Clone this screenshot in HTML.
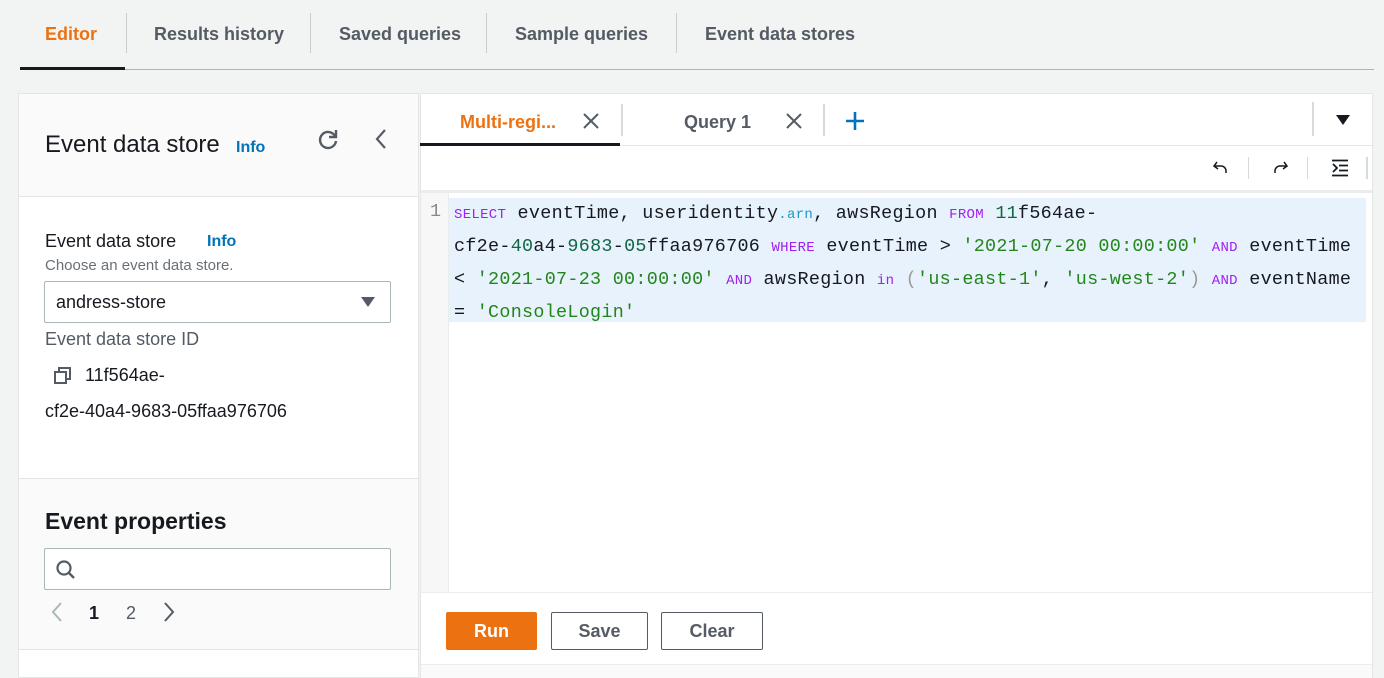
<!DOCTYPE html>
<html><head><meta charset="utf-8"><style>
*{box-sizing:border-box;margin:0;padding:0}
body{width:1384px;height:678px;background:#f2f3f3;font-family:"Liberation Sans",sans-serif;position:relative;overflow:hidden;color:#16191f}
.a{position:absolute}
.tab{position:absolute;top:24px;font-size:18px;font-weight:bold;color:#545b64}
.sep{position:absolute;top:13px;width:1px;height:40px;background:#c8cdcd}
.mono{font-family:"Liberation Mono",monospace;font-size:18.4px;}
.kw{color:#a020f0;font-size:14px}
.s{color:#22861a}
.n{color:#116644}
.btn{position:absolute;top:612px;height:38px;border:1px solid #545b64;border-radius:2px;background:#fff;font-weight:bold;font-size:18px;color:#545b64;text-align:center;line-height:36px}
</style></head><body>
<div class="tab" style="left:45px;color:#ec7211">Editor</div>
<div class="sep" style="left:126px"></div>
<div class="tab" style="left:154px">Results history</div>
<div class="sep" style="left:310px"></div>
<div class="tab" style="left:339px">Saved queries</div>
<div class="sep" style="left:486px"></div>
<div class="tab" style="left:515px">Sample queries</div>
<div class="sep" style="left:676px"></div>
<div class="tab" style="left:705px">Event data stores</div>
<div class="a" style="left:20px;top:69px;width:1354px;height:1px;background:#aab7b8"></div>
<div class="a" style="left:20px;top:67px;width:105px;height:3px;background:#16191f"></div>

<!-- left panel -->
<div class="a" style="left:18px;top:93px;width:401px;height:585px;background:#fff;border:1px solid #e4e6e6"></div>
<div class="a" style="left:19px;top:94px;width:399px;height:103px;background:#fafafa;border-bottom:1px solid #e4e6e6"></div>
<div class="a" style="left:45px;top:131px;font-size:24px">Event data store</div>
<div class="a" style="left:236px;top:139px;font-size:16px;font-weight:bold;color:#0073bb">Info</div>
<svg class="a" style="left:316px;top:127px" width="24" height="24" viewBox="0 0 24 24"><path d="M19 9A8 8 0 1 0 20 14" fill="none" stroke="#545b64" stroke-width="2.4"/><path d="M20 3v7h-7" fill="none" stroke="#545b64" stroke-width="2.4"/></svg>
<svg class="a" style="left:372px;top:127px" width="18" height="24" viewBox="0 0 18 24"><path d="M13 3L5 12l8 9" fill="none" stroke="#545b64" stroke-width="2.2"/></svg>
<div class="a" style="left:45px;top:231px;font-size:18px">Event data store</div>
<div class="a" style="left:207px;top:233px;font-size:16px;font-weight:bold;color:#0073bb">Info</div>
<div class="a" style="left:45px;top:257px;font-size:15px;color:#687078">Choose an event data store.</div>
<div class="a" style="left:44px;top:281px;width:347px;height:42px;border:1px solid #aab7b8;border-radius:2px;background:#fff"></div>
<div class="a" style="left:56px;top:292px;font-size:18px">andress-store</div>
<svg class="a" style="left:360px;top:296px" width="16" height="12"><path d="M1 1h14L8 11z" fill="#545b64"/></svg>
<div class="a" style="left:45px;top:329px;font-size:18px;color:#545b64">Event data store ID</div>
<svg class="a" style="left:53px;top:366px" width="20" height="20" viewBox="0 0 20 20"><rect x="2" y="6" width="11" height="11" fill="none" stroke="#545b64" stroke-width="2"/><path d="M6 6V2h11v11h-4" fill="none" stroke="#545b64" stroke-width="2"/></svg>
<div class="a" style="left:85px;top:365px;font-size:18px">11f564ae-</div>
<div class="a" style="left:45px;top:401px;font-size:18px">cf2e-40a4-9683-05ffaa976706</div>
<div class="a" style="left:19px;top:478px;width:399px;height:172px;background:#fafafa;border-top:1px solid #e4e6e6;border-bottom:1px solid #e4e6e6"></div>
<div class="a" style="left:45px;top:508px;font-size:23px;font-weight:bold">Event properties</div>
<div class="a" style="left:44px;top:548px;width:347px;height:42px;border:1px solid #aab7b8;border-radius:2px;background:#fff"></div>
<svg class="a" style="left:55px;top:559px" width="22" height="22"><circle cx="9" cy="9" r="6.5" fill="none" stroke="#545b64" stroke-width="2.2"/><path d="M13.5 13.5L19 19" stroke="#545b64" stroke-width="2.4"/></svg>
<svg class="a" style="left:50px;top:601px" width="14" height="22"><path d="M11 2L3 11l8 9" fill="none" stroke="#aab7b8" stroke-width="2"/></svg>
<div class="a" style="left:89px;top:603px;font-size:18px;font-weight:bold">1</div>
<div class="a" style="left:126px;top:603px;font-size:18px;color:#545b64">2</div>
<svg class="a" style="left:162px;top:601px" width="14" height="22"><path d="M3 2l8 9-8 9" fill="none" stroke="#545b64" stroke-width="2"/></svg>

<!-- right panel -->
<div class="a" style="left:420px;top:93px;width:953px;height:585px;background:#fff;border:1px solid #e4e6e6"></div>
<div class="a" style="left:421px;top:145px;width:951px;height:1px;background:#e4e6e6"></div>
<div class="a" style="left:460px;top:112px;font-size:18px;font-weight:bold;color:#ec7211">Multi-regi...</div>
<svg class="a" style="left:583px;top:113px" width="16" height="16"><path d="M1 1l14 14M15 1L1 15" stroke="#545b64" stroke-width="2"/></svg>
<div class="a" style="left:420px;top:143px;width:200px;height:3px;background:#16191f"></div>
<div class="a" style="left:621px;top:104px;width:2px;height:32px;background:#d5dbdb"></div>
<div class="a" style="left:684px;top:112px;font-size:18px;font-weight:bold;color:#545b64">Query 1</div>
<svg class="a" style="left:786px;top:113px" width="16" height="16"><path d="M1 1l14 14M15 1L1 15" stroke="#545b64" stroke-width="2"/></svg>
<div class="a" style="left:823px;top:104px;width:2px;height:32px;background:#d5dbdb"></div>
<svg class="a" style="left:845px;top:111px" width="20" height="20"><path d="M10 1v18M1 10h18" stroke="#0073bb" stroke-width="2.6"/></svg>
<div class="a" style="left:1312px;top:102px;width:2px;height:34px;background:#d5dbdb"></div>
<svg class="a" style="left:1335px;top:114px" width="16" height="12"><path d="M1 1h14L8 11z" fill="#16191f"/></svg>
<svg class="a" style="left:1213px;top:160px" width="16" height="16"><path d="M4 2L1 6l4 3" fill="none" stroke="#16191f" stroke-width="1.5"/><path d="M1.5 6H8a5 5 0 0 1 5 5v2" fill="none" stroke="#16191f" stroke-width="1.5"/></svg>
<div class="a" style="left:1248px;top:157px;width:1px;height:22px;background:#d5dbdb"></div>
<svg class="a" style="left:1272px;top:160px" width="16" height="16"><path d="M12 2l3 4-4 3" fill="none" stroke="#16191f" stroke-width="1.5"/><path d="M14.5 6H8a5 5 0 0 0-5 5v2" fill="none" stroke="#16191f" stroke-width="1.5"/></svg>
<div class="a" style="left:1307px;top:157px;width:1px;height:22px;background:#d5dbdb"></div>
<svg class="a" style="left:1331px;top:159px" width="18" height="18"><path d="M1 1.5h16M8 6.5h9M8 11.5h9M1 16.5h16M2 5l4 4-4 4" fill="none" stroke="#16191f" stroke-width="1.8"/></svg>
<div class="a" style="left:1366px;top:157px;width:2px;height:22px;background:#d5dbdb"></div>
<div class="a" style="left:421px;top:190px;width:951px;height:3px;background:#eaeded"></div>
<div class="a" style="left:421px;top:193px;width:28px;height:399px;background:#f7f7f7;border-right:1px solid #eaeded"></div>
<div class="a mono" style="left:430px;top:201px;color:#888">1</div>
<div class="a" style="left:449px;top:198px;width:917px;height:124px;background:#e8f2fc"></div>
<div class="a mono" style="left:454px;top:198px;line-height:31px;white-space:pre;letter-spacing:0.3px"><span class="kw">SELECT</span> eventTime, useridentity<span style="color:#1a9bc4;font-size:14px">.arn</span>, awsRegion <span class="kw">FROM</span> <span class="n">11</span>f564ae-
cf2e-<span class="n">40</span>a4-<span class="n">9683</span>-<span class="n">05</span>ffaa976706 <span class="kw">WHERE</span> eventTime &gt; <span class="s">'2021-07-20 00:00:00'</span> <span class="kw">AND</span> eventTime
&lt; <span class="s">'2021-07-23 00:00:00'</span> <span class="kw">AND</span> awsRegion <span class="kw">in</span> <span style="color:#999">(</span><span class="s">'us-east-1'</span>, <span class="s">'us-west-2'</span><span style="color:#999">)</span> <span class="kw">AND</span> eventName
= <span class="s">'ConsoleLogin'</span></div>
<div class="a" style="left:421px;top:592px;width:951px;height:1px;background:#eaeded"></div>
<div class="a" style="left:421px;top:664px;width:951px;height:14px;background:#fafafa;border-top:1px solid #eaeded"></div>
<div class="btn" style="left:446px;width:91px;background:#ec7211;border-color:#ec7211;color:#fff">Run</div>
<div class="btn" style="left:551px;width:97px">Save</div>
<div class="btn" style="left:661px;width:102px">Clear</div>
</body></html>
